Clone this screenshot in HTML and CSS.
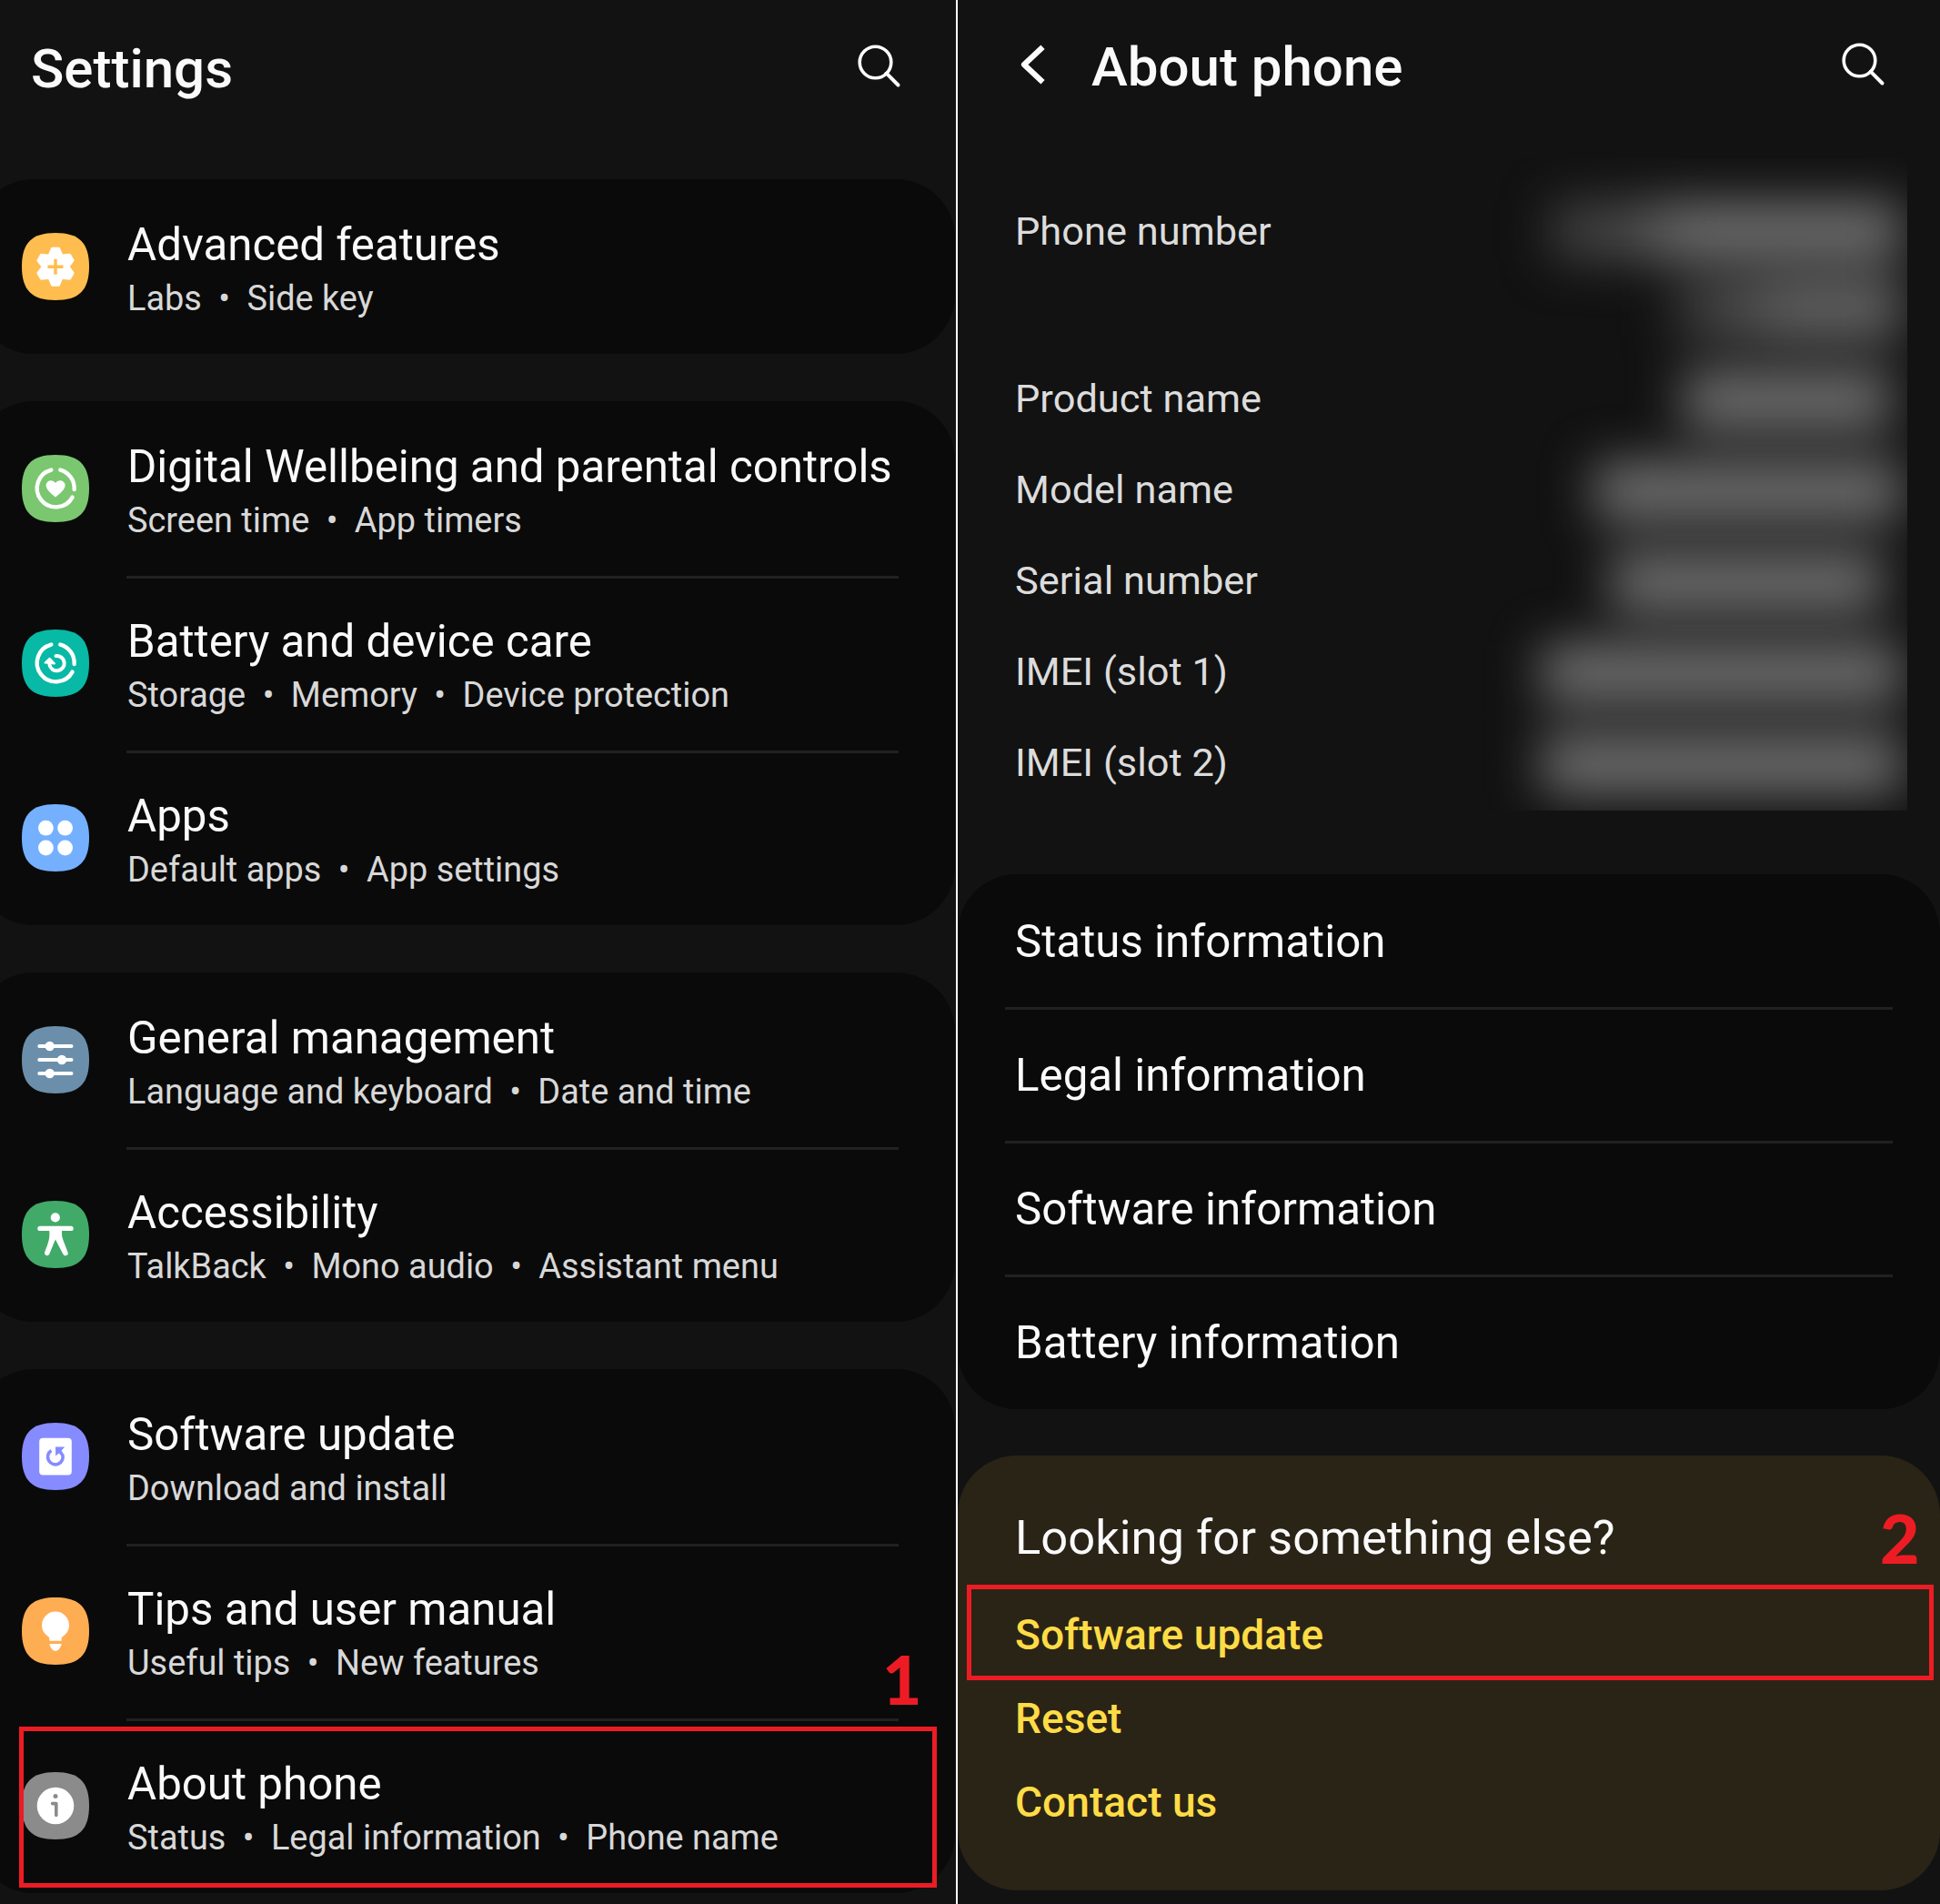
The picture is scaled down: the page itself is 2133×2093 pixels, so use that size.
FILE: index.html
```html
<!DOCTYPE html>
<html lang="en">
<head>
<meta charset="utf-8">
<title>Settings</title>
<link rel="stylesheet" href="styles.css">
</head>
<body>
<svg class="defs" width="0" height="0" aria-hidden="true">
  <symbol id="squircle" viewBox="0 0 74 74"><path d="M37 0C63 0 74 11 74 37S63 74 37 74 0 63 0 37 11 0 37 0Z"/></symbol>
  <symbol id="search" viewBox="0 0 52 52"><circle cx="22.5" cy="21.5" r="17.3" fill="none" stroke="#fff" stroke-width="3.6"/><path d="M34.7 33.7 47.5 46.5" stroke="#fff" stroke-width="4" stroke-linecap="round"/></symbol>
  <symbol id="ring" viewBox="0 0 74 74"><path d="M42.3 16.6A20.7 20.7 0 0 1 57.6 38M55.6 46.6A20.7 20.7 0 1 1 32.3 16.6" fill="none" stroke="#fff" stroke-width="4.4" stroke-linecap="round"/></symbol>
</svg>
<main class="screens">
  <section class="panel settings">
    <header class="bar">
      <h1>Settings</h1>
      <svg class="search" viewBox="0 0 52 52"><use href="#search"/></svg>
    </header>

    <div class="card">
      <div class="row">
        <svg class="icon" viewBox="0 0 74 74"><use href="#squircle" fill="#ffbd4f"/><g fill="#fff" stroke="#fff" stroke-width="3" stroke-linejoin="round"><path id="tooth" d="M33.5 17.2H40.5L44 25V49L40.5 57.2H33.5L30 49V25Z"/><use href="#tooth" transform="rotate(60 37 37.2)"/><use href="#tooth" transform="rotate(120 37 37.2)"/></g><path d="M28.5 37.2H45.5M37 28.7V45.7" stroke="#ffbd4f" stroke-width="3.4"/></svg>
        <div class="text"><h2>Advanced features</h2><p>Labs <i>•</i> Side key</p></div>
      </div>
    </div>

    <div class="card">
      <div class="row">
        <svg class="icon" viewBox="0 0 74 74"><use href="#squircle" fill="#7ac770"/><use href="#ring"/><path d="M37 46.6C33 43.4 26.6 38.4 26.6 33.6 26.6 28 34 26.2 37 31 40 26.2 47.6 28 47.6 33.6 47.6 38.4 41 43.4 37 46.6Z" fill="#fff"/></svg>
        <div class="text"><h2>Digital Wellbeing and parental controls</h2><p>Screen time <i>•</i> App timers</p></div>
      </div>
      <div class="row">
        <svg class="icon" viewBox="0 0 74 74"><use href="#squircle" fill="#08b9a5"/><use href="#ring"/><path d="M37.5 29A8.2 8.2 0 1 1 30.4 38.5" fill="none" stroke="#fff" stroke-width="4" stroke-linecap="round"/><path d="M25.5 36.6 30.5 31.8 36 37.4Z" fill="#fff" stroke="#fff" stroke-width="2" stroke-linejoin="round"/></svg>
        <div class="text"><h2>Battery and device care</h2><p>Storage <i>•</i> Memory <i>•</i> Device protection</p></div>
      </div>
      <div class="row">
        <svg class="icon" viewBox="0 0 74 74"><use href="#squircle" fill="#75b0ff"/><g fill="#fff"><circle cx="26.4" cy="26.2" r="8.4"/><circle cx="47.6" cy="26.2" r="8.4"/><circle cx="26.4" cy="48" r="8.4"/><circle cx="47.6" cy="48" r="8.4"/></g></svg>
        <div class="text"><h2>Apps</h2><p>Default apps <i>•</i> App settings</p></div>
      </div>
    </div>

    <div class="card">
      <div class="row">
        <svg class="icon" viewBox="0 0 74 74"><use href="#squircle" fill="#6b8fab"/><path d="M19.3 22H54.5M19.3 37H54.5M19.3 52H54.5" stroke="#fff" stroke-width="4" stroke-linecap="round"/><g fill="#fff"><circle cx="30.7" cy="22" r="5.2"/><circle cx="44" cy="37" r="5.2"/><circle cx="30.7" cy="52" r="5.2"/></g></svg>
        <div class="text"><h2>General management</h2><p>Language and keyboard <i>•</i> Date and time</p></div>
      </div>
      <div class="row">
        <svg class="icon" viewBox="0 0 74 74"><use href="#squircle" fill="#41aa68"/><circle cx="36.8" cy="18.4" r="5.1" fill="#fff"/><path d="M20 30.4H54" stroke="#fff" stroke-width="5.4" stroke-linecap="round"/><path d="M30 30H44V36.5C44 40 45.5 43.5 47.7 49L50.5 56.4A2.8 2.8 0 0 1 45.3 58.6L36.9 42.5 30.3 58.6A2.8 2.8 0 0 1 25.1 56.6L28.3 48C30 43 30.4 40 30.4 36.5Z" fill="#fff"/></svg>
        <div class="text"><h2>Accessibility</h2><p>TalkBack <i>•</i> Mono audio <i>•</i> Assistant menu</p></div>
      </div>
    </div>

    <div class="card">
      <div class="row">
        <svg class="icon" viewBox="0 0 74 74"><use href="#squircle" fill="#868bff"/><rect x="19.2" y="16.7" width="35.6" height="40.7" rx="4" fill="#fff"/><path d="M32.4 30.5A8.3 8.3 0 1 0 44.6 34.6" fill="none" stroke="#868bff" stroke-width="3.6"/><path d="M37 26.6H47.2L43.6 30.6 46 34.5 43.6 36.5 40.8 33.4 37.2 36.6Z" fill="#868bff"/></svg>
        <div class="text"><h2>Software update</h2><p>Download and install</p></div>
      </div>
      <div class="row">
        <svg class="icon" viewBox="0 0 74 74"><use href="#squircle" fill="#ffad52"/><path d="M37 15.5A15 15 0 0 1 52 30.5C52 37.5 48 40.5 44.5 43.5 43.8 44.2 43.6 45 43.6 47.8H30.4C30.4 45 30.2 44.2 29.5 43.5 26 40.5 22 37.5 22 30.5A15 15 0 0 1 37 15.5ZM30.4 51H43.6C43.4 54 41.6 56 40.2 57.4 38.4 59.2 35.6 59.2 33.8 57.4 32.4 56 30.6 54 30.4 51Z" fill="#fff"/></svg>
        <div class="text"><h2>Tips and user manual</h2><p>Useful tips <i>•</i> New features</p></div>
      </div>
      <div class="row">
        <svg class="icon" viewBox="0 0 74 74"><use href="#squircle" fill="#8b8b8b"/><circle cx="37" cy="37" r="20.3" fill="#fff"/><circle cx="37" cy="26.6" r="2.5" fill="#8b8b8b"/><path d="M33.6 34.6H37.8V47.4" fill="none" stroke="#8b8b8b" stroke-width="3.6" stroke-linecap="round" stroke-linejoin="round"/></svg>
        <div class="text"><h2>About phone</h2><p>Status <i>•</i> Legal information <i>•</i> Phone name</p></div>
        <span class="step step-one">1</span>
        <span class="mark mark-about"></span>
      </div>
    </div>
  </section>

  <section class="panel about">
    <header class="bar">
      <svg class="back" viewBox="0 0 32 48"><path d="M26.5 4.8 6 24 26.5 43.2" fill="none" stroke="#fff" stroke-width="6.2" stroke-linejoin="round"/></svg>
      <h1>About phone</h1>
      <svg class="search" viewBox="0 0 52 52"><use href="#search"/></svg>
    </header>

    <div class="details">
      <ul class="labels">
        <li class="tall">Phone number</li>
        <li>Product name</li>
        <li>Model name</li>
        <li>Serial number</li>
        <li>IMEI (slot 1)</li>
        <li>IMEI (slot 2)</li>
      </ul>
      <div class="hidden-values">
        <div class="values">
          <b class="number" style="width:384px"></b>
          <b class="rest" style="width:250px"></b>
          <b class="short" style="width:228px"></b>
          <b style="width:338px"></b>
          <b class="inset" style="width:298px"></b>
          <b style="width:396px"></b>
          <b style="width:396px"></b>
        </div>
      </div>
    </div>

    <ul class="card links">
      <li>Status information</li>
      <li>Legal information</li>
      <li>Software information</li>
      <li>Battery information</li>
    </ul>

    <div class="card more">
      <h2>Looking for something else?</h2>
      <ul>
        <li>Software update<span class="mark mark-update"></span></li>
        <li>Reset</li>
        <li>Contact us</li>
      </ul>
      <span class="step step-two">2</span>
    </div>
  </section>
</main>
</body>
</html>
```
FILE: styles.css
```css
* { box-sizing: border-box; margin: 0; padding: 0; }

body {
  background: #121212;
  color: #fafafa;
  font-family: Roboto, "Liberation Sans", sans-serif;
}

ul { list-style: none; }
svg { display: block; flex: none; }
.defs { position: absolute; }

.screens {
  display: flex;
  width: 2133px;
  height: 2093px;
  overflow: hidden;
}

.panel { overflow: hidden; background: #121212; }
.settings { width: 1053px; border-right: 2px solid #fff; }
.about { width: 1080px; }

/* title bars */
.bar { display: flex; align-items: center; }
.bar h1 { flex: 1; margin-bottom: 1px; font-size: 60px; font-weight: 500; line-height: 72px; }
.search { width: 52px; height: 52px; margin-bottom: 8px; }
.back { width: 32px; height: 48px; margin: 0 48px 7px 0; }
.settings .bar { height: 153px; margin-bottom: 44px; padding: 0 59px 0 34px; }
.about .bar { height: 149px; padding: 0 59px 0 67px; }

/* cards */
.card { background: #0a0a0a; border-radius: 65px; }
.settings .card { width: 1078px; margin: 0 0 52px -28px; }

.row {
  position: relative;
  display: flex;
  height: 192px;
  padding: 42px 0 0 52px;
}
.row + .row::before {
  content: "";
  position: absolute;
  top: 0;
  left: 167px;
  width: 849px;
  height: 3px;
  background: #212121;
}
.icon { width: 74px; height: 74px; margin: 17px 42px 0 0; }
.row h2 { font-size: 49.25px; font-weight: 400; line-height: 60px; }
.row p { margin-top: 5px; color: #d8d8d8; font-size: 37.9px; line-height: 48px; white-space: nowrap; }
.row i { margin: 0 9px; font-style: normal; }

/* phone details */
.details {
  display: flex;
  justify-content: space-between;
  height: 812px;
  padding: 25px 36px 0 63px;
}
.labels { padding-top: 30px; color: #dcdcdc; font-size: 43.4px; line-height: 101px; }
.labels li { height: 100px; }
.labels .tall { height: 184px; }

.hidden-values { width: 560px; height: 717px; overflow: hidden; }
.values {
  display: flex;
  flex-direction: column;
  align-items: flex-end;
  gap: 36px;
  padding: 48px 6px 0 0;
  filter: blur(27px);
}
.values b { height: 64px; background: #6f6f6f; }
.values .number { margin-bottom: -14px; background: linear-gradient(90deg, #424242 18%, #6f6f6f 38%); }
.values .rest { background: linear-gradient(90deg, #3c3c3c 10%, #666 50%); }
.values .short { margin-right: 12px; }
.values .inset { margin-right: 22px; }

/* information links */
.links li {
  position: relative;
  height: 147px;
  padding-left: 63px;
  font-size: 49.25px;
  line-height: 149px;
}
.links li + li::before {
  content: "";
  position: absolute;
  top: -1px;
  left: 52px;
  width: 976px;
  height: 3px;
  background: #212121;
}

/* related links */
.more {
  position: relative;
  height: 478px;
  margin-top: 51px;
  padding: 58px 0 0 63px;
  background: #2a2416;
}
.more h2 { margin-bottom: 29px; font-size: 52.5px; font-weight: 400; line-height: 64px; }
.more li {
  position: relative;
  color: #ffdc46;
  font-size: 46.1px;
  font-weight: 500;
  line-height: 92px;
}

/* step annotations */
.mark { position: absolute; border: 5px solid #ed1c24; }
.mark-about { top: 9px; left: 49px; width: 1009px; height: 177px; }
.mark-update { top: -9px; left: -53px; width: 1063px; height: 105px; }
.step {
  position: absolute;
  color: #ed1c24;
  font: 900 75px/74px Lato, sans-serif;
}
.step-one { top: -81px; left: 998px; }
.step-two { top: 53px; left: 1014px; }
```
